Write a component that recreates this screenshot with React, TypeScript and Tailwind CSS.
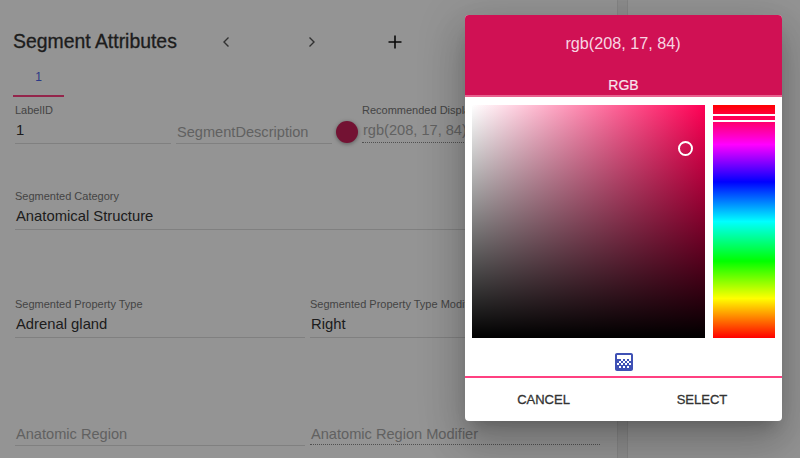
import React from "react";

function Field({ label, value, placeholder, dotted, className }: { label?: string; value?: string; placeholder?: boolean; dotted?: boolean; className: string }) {
  const box = dotted ? "h-[25px] border-dotted border-[#8a8a8a]" : "h-[26px] border-[#dcdcdc]";
  const text = placeholder ? "text-[#a8a8a8] text-[14.6px]" : "text-[#333333] text-[14.8px]";
  const offset = !label ? "pt-[2px]" : "";
  return (
    <div className={`flex flex-col ${className}`}>
      <div className="h-[16px] text-[11px] leading-[16px] text-[#767676] whitespace-nowrap overflow-hidden">{label}</div>
      <div className={`pl-[1px] leading-[24px] whitespace-nowrap overflow-hidden border-b ${box} ${text} ${offset}`}>
        {value}
      </div>
    </div>
  );
}

export default function App() {
  return (
    <div className="relative w-[800px] h-[458px] overflow-hidden bg-white font-['Liberation_Sans',Arial,sans-serif]">
      <div className="flex h-full">
        <div className="w-[617px] h-full px-[15px] flex flex-col">
          <div className="flex items-center h-[40px] mt-[22px] -ml-[2px]">
            <h1 className="w-[201px] text-[19.4px] text-[#333333] whitespace-nowrap [-webkit-text-stroke:0.3px]">Segment Attributes</h1>
            <svg width="24" height="24" viewBox="0 0 24 24" className="mr-[61px] text-[#555]"><path d="M14.5 7.5 10 12l4.5 4.5" fill="none" stroke="currentColor" strokeWidth="1.4" /></svg>
            <svg width="24" height="24" viewBox="0 0 24 24" className="mr-[60px] ml-[1px] text-[#555]"><path d="M9.5 7.5 14 12l-4.5 4.5" fill="none" stroke="currentColor" strokeWidth="1.4" /></svg>
            <svg width="24" height="24" viewBox="0 0 24 24" className="text-[#111] -ml-[1px]"><path d="M12 5.5v13M5.5 12h13" fill="none" stroke="currentColor" strokeWidth="1.6" /></svg>
          </div>
          <div className="-ml-[2px] w-[51px] h-[35px] border-b-2 border-[#ff4081] flex justify-center pt-[7px] text-[12px] leading-[16px] text-[#4a63e8]">1</div>

          <div className="flex mt-[5px] items-start">
            <Field label="LabelID" value="1" className="w-[156px]" />
            <Field value="SegmentDescription" placeholder className="w-[156px] ml-[5px]" />
            <div className="w-[22px] h-[22px] ml-[4px] mt-[19px] rounded-full bg-[#c61f58] shadow-[0_1px_4px_rgba(0,0,0,0.4)]" />
            <Field label="Recommended Display RGB Value" value="rgb(208, 17, 84)" placeholder dotted className="w-[238px] ml-[4px]" />
          </div>

          <Field label="Segmented Category" value="Anatomical Structure" className="w-[585px] mt-[44px]" />

          <div className="flex mt-[66px] gap-[5px]">
            <Field label="Segmented Property Type" value="Adrenal gland" className="w-[290px]" />
            <Field label="Segmented Property Type Modifier" value="Right" className="w-[290px]" />
          </div>

          <div className="flex mt-[66px] gap-[5px]">
            <Field value="Anatomic Region" placeholder className="w-[290px]" />
            <Field value="Anatomic Region Modifier" placeholder dotted className="w-[290px]" />
          </div>
        </div>
        <div className="w-[11px] h-full bg-[#f3f3f3] border-x border-[#e6e6e6]" />
        <div className="flex-1 h-full" />
      </div>

      <div className="absolute inset-0 bg-black/[0.42]" />

      <div className="absolute left-[465px] top-[15px] w-[317px] h-[406px] rounded-[4px] bg-white overflow-hidden shadow-[0_11px_15px_-7px_rgba(0,0,0,0.2),0_24px_38px_3px_rgba(0,0,0,0.14),0_9px_46px_8px_rgba(0,0,0,0.12)] flex flex-col">
        <div className="h-[82px] shrink-0 bg-[#d01154] flex flex-col items-center border-b-2 border-[#e8628f]">
          <div className="mt-[17px] -ml-[1px] text-[16.2px] leading-[22px] text-[#f8d5e2]">rgb(208, 17, 84)</div>
          <div className="mt-[23px] text-[14px] leading-[16px] text-[#f8e4ec] [-webkit-text-stroke:0.2px]">RGB</div>
        </div>
        <div className="flex px-[7px] pt-[8px] gap-[8px] h-[241px] shrink-0">
          <div className="relative w-[233px] h-[233px] bg-[linear-gradient(to_top,#000,transparent),linear-gradient(to_right,#fff,#ff0055)]">
            <div className="absolute left-[206px] top-[36px] w-[15px] h-[15px] rounded-full border-2 border-white" />
          </div>
          <div className="relative w-[62px] h-[233px] bg-[linear-gradient(to_bottom,#f00_0%,#f0f_17%,#00f_33%,#0ff_50%,#0f0_67%,#ff0_83%,#f00_100%)]">
            <div className="absolute left-0 right-0 top-[9px] h-[8px] border-y-2 border-white bg-[#ff0055]" />
          </div>
        </div>
        <div className="h-[40px] shrink-0 pt-[10px] flex items-center justify-center border-b-2 border-[#ff4081]">
          <svg width="24" height="24" viewBox="0 0 24 24" fill="#3f51b5">
            <path fillRule="evenodd" d="M11 9h2v2h-2zm-2 2h2v2H9zm4 0h2v2h-2zm2-2h2v2h-2zM7 9h2v2H7zm12-6H5c-1.1 0-2 .9-2 2v14c0 1.1.9 2 2 2h14c1.1 0 2-.9 2-2V5c0-1.1-.9-2-2-2zM9 18H7v-2h2v2zm4 0h-2v-2h2v2zm4 0h-2v-2h2v2zm2-7h-2v2h2v2h-2v-2h-2v2h-2v-2h-2v2H9v-2H7v2H5v-2h2V9H5V5h14v6z" />
          </svg>
        </div>
        <div className="flex-1 flex items-center text-[13px] text-[#333333] [-webkit-text-stroke:0.3px]">
          <div className="w-[157px] text-center">CANCEL</div>
          <div className="w-[160px] text-center">SELECT</div>
        </div>
      </div>
    </div>
  );
}
